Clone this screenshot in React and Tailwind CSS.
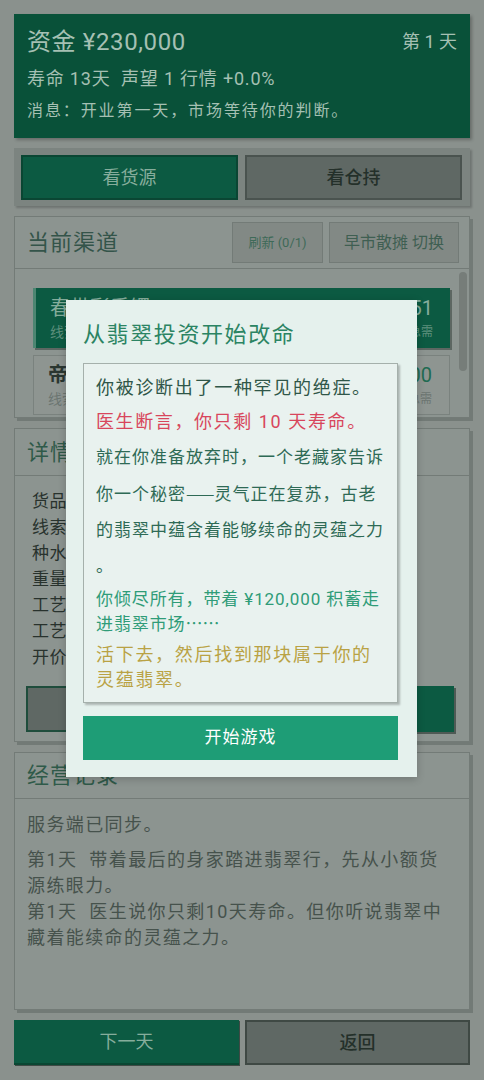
import React from "react";

const Card = ({ className = "", children }) => (
  <div
    className={`flex flex-col border border-[#737b77] bg-[#8c9490] shadow-[3px_3px_0_#727a76] ${className}`}
  >
    {children}
  </div>
);

const channelItems = [
  { name: "春带彩手镯", sub: "线索：老坑糯冰，色带偏淡", price: "¥2,451", tag: "急需", active: true },
  { name: "帝王绿蛋面", sub: "线索：皮壳紧实，疑似有裂", price: "¥8,000", tag: "急需", active: false },
];

const details = [
  "货品：春带彩手镯",
  "线索：老坑糯冰，色带偏淡",
  "种水：糯冰种",
  "重量：38.6 克",
  "工艺：手工打磨",
  "工艺评分：B+",
  "开价：¥2,451",
];

const App = () => {
  return (
    <div className="relative min-h-screen bg-[#8a918d] px-[14px] pt-[14px] pb-[14px] font-['Roboto','Noto_Sans_CJK_SC',sans-serif]">
      {/* 顶部资金 */}
      <div className="h-[124px] bg-[#095139] px-[13px] pt-[12px] text-[#a5c0b3] shadow-[2px_2px_3px_rgba(0,0,0,0.25)]">
        <div className="flex items-center justify-between">
          <span className="text-[24px] leading-[32px] tracking-[0.6px]">资金 ¥230,000</span>
          <span className="text-[18px] leading-[32px]">第 1 天</span>
        </div>
        <div className="mt-[8px] text-[18px] leading-[26px] tracking-[0.8px]">寿命 13天&nbsp; 声望 1 行情 +0.0%</div>
        <div className="mt-[7px] text-[16px] leading-[24px] tracking-[1.9px]">
          消息：开业第一天，市场等待你的判断。
        </div>
      </div>

      {/* 切换 */}
      <div className="mt-[10px] grid h-[58px] grid-cols-2 gap-[7px] bg-[#7c8480] pt-[7px] pr-[8px] pl-[7px] shadow-[2px_2px_2px_rgba(0,0,0,0.2)]">
        <button className="h-[45px] border-2 border-[#0a4633] bg-[#0c5a42] text-[18px] text-[#86ad9c]">看货源</button>
        <button className="h-[45px] border-2 border-[#4a534f] bg-[#5f6864] text-[18px] font-medium text-[#24302a]">
          看仓持
        </button>
      </div>

      {/* 当前渠道 */}
      <Card className="mt-[10px] h-[202px]">
        <div className="flex h-[52px] shrink-0 items-center justify-between border-b border-[#737b77] pr-[10px] pl-[12px]">
          <span className="text-[22px] tracking-[1px] text-[#34544a]">当前渠道</span>
          <div className="flex gap-[6px]">
            <button className="h-[41px] w-[91px] border border-[#737b77] bg-[#828985] text-[13px] text-[#3e6a58]">
              刷新 (0/1)
            </button>
            <button className="h-[41px] w-[130px] border border-[#737b77] bg-[#828985] text-[16px] text-[#3f5f52]">
              早市散摊 切换
            </button>
          </div>
        </div>
        <div className="relative flex flex-1 flex-col gap-[7px] overflow-hidden pt-[19px] pr-[19px] pl-[18px]">
          {channelItems.map((item) => (
            <div
              key={item.name}
              className={`flex h-[60px] shrink-0 items-center justify-between pr-[17px] pl-[14px] ${
                item.active
                  ? "border-l-[3px] border-l-[#4d8672] bg-[#0c5a42] shadow-[2px_2px_0_#5d6762]"
                  : "border border-[#7a827e] bg-[#8e9591]"
              }`}
            >
              <div className="flex flex-col">
                <span
                  className={`text-[20px] leading-[28px] ${
                    item.active ? "text-[#86ad9c]" : "font-bold text-[#2a3630]"
                  }`}
                >
                  {item.name}
                </span>
                <span className={`text-[14px] leading-[20px] ${item.active ? "text-[#5d8f7c]" : "text-[#6c7671]"}`}>
                  {item.sub}
                </span>
              </div>
              <div className="flex flex-col items-end">
                <span className={`text-[20px] leading-[28px] ${item.active ? "text-[#86ad9c]" : "text-[#1f6b52]"}`}>
                  {item.price}
                </span>
                <span className={`text-[12px] leading-[20px] ${item.active ? "text-[#5d8f7c]" : "text-[#6c7671]"}`}>
                  {item.tag}
                </span>
              </div>
            </div>
          ))}
          <div className="absolute top-[3px] right-[2px] h-[99px] w-[8px] rounded-full bg-[#767d79]"></div>
        </div>
      </Card>

      {/* 详情 */}
      <Card className="mt-[10px] h-[314px]">
        <div className="flex h-[47px] shrink-0 items-center border-b border-[#737b77] pl-[12px]">
          <span className="text-[22px] tracking-[1px] text-[#2f5a49]">详情</span>
        </div>
        <div className="flex flex-col pt-[12px] pl-[17px] text-[17px] leading-[26px] tracking-[0.5px] text-[#28322d]">
          {details.map((d) => (
            <span key={d}>{d}</span>
          ))}
        </div>
        <div className="mt-[16px] grid grid-cols-2 gap-[6px] pr-[15px] pl-[11px]">
          <button className="h-[46px] border-2 border-[#1f4d3c] bg-[#5f6864] text-[18px] text-[#26322c]">放弃</button>
          <button className="h-[46px] bg-[#0c5a42] text-[18px] text-[#86ad9c] shadow-[2px_2px_0_#4f5a55]">买入</button>
        </div>
      </Card>

      {/* 经营记录 */}
      <Card className="mt-[10px] h-[258px]">
        <div className="flex h-[46px] shrink-0 items-center border-b border-[#737b77] pl-[12px]">
          <span className="text-[22px] tracking-[1px] text-[#2f5a49]">经营记录</span>
        </div>
        <div className="pt-[13px] pr-[12px] pl-[12px] text-[18px] leading-[26px] tracking-[1.4px] text-[#46524c]">
          <p>服务端已同步。</p>
          <p className="mt-[9px]">
            <span className="mr-[12px]">第1天</span>带着最后的身家踏进翡翠行，先从小额货源练眼力。
          </p>
          <p>
            <span className="mr-[12px]">第1天</span>医生说你只剩10天寿命。但你听说翡翠中藏着能续命的灵蕴之力。
          </p>
        </div>
      </Card>

      {/* 底部 */}
      <div className="mt-[10px] grid grid-cols-2 gap-[6px]">
        <button className="h-[45px] border-b-2 border-[#0a4733] bg-[#0c5a42] text-[18px] text-[#86ad9c] shadow-[1px_1px_0_#3f4a45]">
          下一天
        </button>
        <button className="h-[45px] border-2 border-[#3f4944] bg-[#5f6864] text-[18px] font-medium text-[#24302a]">
          返回
        </button>
      </div>

      {/* 弹窗 */}
      <div className="absolute top-[300px] left-[66px] flex h-[477px] w-[351px] flex-col bg-[#e5f1ed] px-[17px] pt-[19px] shadow-[0_2px_8px_rgba(0,0,0,0.2)]">
        <h2 className="text-[22px] leading-[32px] tracking-[1.6px] text-[#2b8463]">从翡翠投资开始改命</h2>
        <div className="mt-[12px] h-[340px] w-[315px] border border-[#a5b0ab] bg-[#e9f2ef] pt-[7px] pl-[12px] shadow-[2px_2px_2px_rgba(0,0,0,0.25)]">
          <p className="text-[18px] leading-[34px] tracking-[1.7px] whitespace-nowrap text-[#2f5648]">
            你被诊断出了一种罕见的绝症。
          </p>
          <p className="text-[18px] leading-[34px] tracking-[1.6px] whitespace-nowrap text-[#d8465c]">
            医生断言，你只剩 10 天寿命。
          </p>
          <p className="text-[17px] leading-[36px] tracking-[1px] whitespace-nowrap text-[#2e6a55]">
            <span className="block">就在你准备放弃时，一个老藏家告诉</span>
            <span className="block">
              你一个秘密<span className="font-['Noto_Sans_CJK_SC',sans-serif] tracking-[0px]">——</span>
              灵气正在复苏，古老
            </span>
            <span className="block">的翡翠中蕴含着能够续命的灵蕴之力</span>
            <span className="block">。</span>
          </p>
          <p className="mt-[3px] text-[17px] leading-[24px] tracking-[0.9px] whitespace-nowrap text-[#2f9c78]">
            <span className="block">你倾尽所有，带着 ¥120,000 积蓄走</span>
            <span className="block">
              进翡翠市场<span className="font-['Noto_Sans_CJK_SC',sans-serif] tracking-[0px]">……</span>
            </span>
          </p>
          <p className="mt-[6px] text-[18px] leading-[25px] tracking-[1.7px] whitespace-nowrap text-[#b9a244]">
            <span className="block">活下去，然后找到那块属于你的</span>
            <span className="block">灵蕴翡翠。</span>
          </p>
        </div>
        <button className="mt-[13px] h-[44px] w-[315px] bg-[#1e9d76] text-[17px] tracking-[1px] text-white">
          开始游戏
        </button>
      </div>
    </div>
  );
};

export default App;
